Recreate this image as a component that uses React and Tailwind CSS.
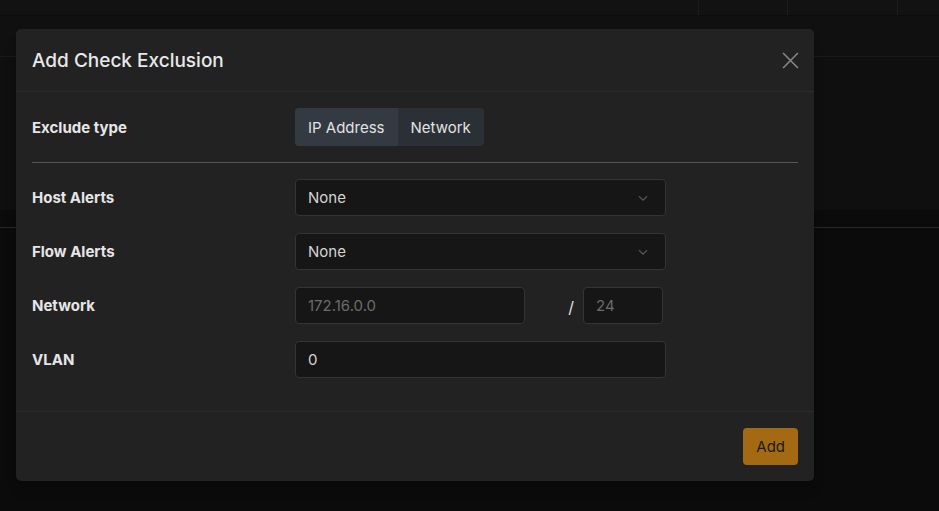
import React, { useState } from 'react';

const font = { fontFamily: 'Inter, "Noto Sans", sans-serif' };

function Chevron() {
    return (
        <svg width="12" height="12" viewBox="0 0 16 16" fill="none" stroke="#555" strokeWidth="1.5" strokeLinecap="round" strokeLinejoin="round">
            <path d="M3 6l5 5 5-5" />
        </svg>
    );
}

function SelectBox({ value }) {
    return (
        <div className="w-[371px] h-[37px] flex items-center justify-between pl-3 pr-4 bg-[#161616] border border-[#343434] rounded-[4px] text-[15px] text-[#d4d4d4]">
            <span className="pt-[2px]">{value}</span>
            <Chevron />
        </div>
    );
}

function Row({ label, children }) {
    return (
        <div className="flex items-center h-[37px]">
            <div className="w-[263px] pt-[2px] text-[15px] font-bold text-[#e6e6e6]">{label}</div>
            {children}
        </div>
    );
}

export default function App() {
    const [type, setType] = useState('ip');

    return (
        <div className="relative w-[939px] h-[511px] overflow-hidden bg-[#0b0b0b]" style={font}>
            {/* dimmed page behind the modal */}
            <div className="absolute inset-x-0 top-0">
                <div className="h-[16px] bg-[#121212] border-b border-[#0c0c0c] flex justify-end">
                    <div className="w-[89px] border-l border-[#1c1c1c]" />
                    <div className="w-[110px] border-l border-[#1c1c1c]" />
                    <div className="w-[42px] border-l border-[#1c1c1c]" />
                </div>
                <div className="h-[41px] bg-[#101010] border-b border-[#1a1a1a]" />
                <div className="h-[153px] bg-[#0f0f0f]" />
                <div className="h-[18px] bg-[#0b0b0b] border-b border-[#262626]" />
            </div>

            <div className="relative pt-[29px] pl-[16px]">
                <div className="w-[798px] h-[452px] bg-[#222222] rounded-[5px] flex flex-col shadow-lg">
                    <div className="h-[63px] flex items-center justify-between px-4 border-b border-[#2c2c2c]">
                        <h1 className="pt-[2px] text-[19px] font-medium text-[#e8e8e8]">Add Check Exclusion</h1>
                        <svg width="17" height="17" viewBox="0 0 16 16" stroke="#8a8a8a" strokeWidth="1.4" className="-mr-[1px]">
                            <path d="M1 1l14 14M15 1L1 15" />
                        </svg>
                    </div>

                    <div className="px-4 pt-4 pb-[33px] border-b border-[#2c2c2c]">
                        <div className="flex items-center h-[38px]">
                            <div className="w-[263px] pt-[2px] text-[15px] font-bold text-[#e6e6e6]">Exclude type</div>
                            <div className="flex h-[38px] rounded-[4px] overflow-hidden text-[15px] text-[#e2e2e2]">
                                <button
                                    onClick={() => setType('ip')}
                                    className={`px-[13px] pt-[2px] ${type === 'ip' ? 'bg-[#333a42]' : 'bg-[#2a3035]'}`}
                                >
                                    IP Address
                                </button>
                                <button
                                    onClick={() => setType('net')}
                                    className={`px-[13px] pt-[2px] ${type === 'net' ? 'bg-[#333a42]' : 'bg-[#2a3035]'}`}
                                >
                                    Network
                                </button>
                            </div>
                        </div>

                        <div className="mt-4 h-px bg-[#575757]" />

                        <div className="mt-4 flex flex-col gap-[17px]">
                            <Row label="Host Alerts">
                                <SelectBox value="None" />
                            </Row>
                            <Row label="Flow Alerts">
                                <SelectBox value="None" />
                            </Row>
                            <Row label="Network">
                                <div className="w-[230px] h-[37px] flex items-center px-3 pt-[2px] bg-[#161616] border border-[#343434] rounded-[4px] text-[15px] text-[#6c6c6c]">
                                    172.16.0.0
                                </div>
                                <span className="w-[58px] flex justify-end pr-[9px] pt-[2px] text-[16px] text-[#e0e0e0]">/</span>
                                <div className="w-[80px] h-[37px] flex items-center px-3 pt-[2px] bg-[#161616] border border-[#343434] rounded-[4px] text-[15px] text-[#6c6c6c]">
                                    24
                                </div>
                            </Row>
                            <Row label="VLAN">
                                <div className="w-[371px] h-[37px] flex items-center px-3 pt-[2px] bg-[#161616] border border-[#343434] rounded-[4px] text-[15px] text-[#d4d4d4]">
                                    0
                                </div>
                            </Row>
                        </div>
                    </div>

                    <div className="flex-1 flex items-center justify-end px-4">
                        <button className="h-[37px] px-[13px] pt-[2px] bg-[#a46a13] rounded-[4px] text-[15px] text-[#1a1a1a]">
                            Add
                        </button>
                    </div>
                </div>
            </div>
        </div>
    );
}
